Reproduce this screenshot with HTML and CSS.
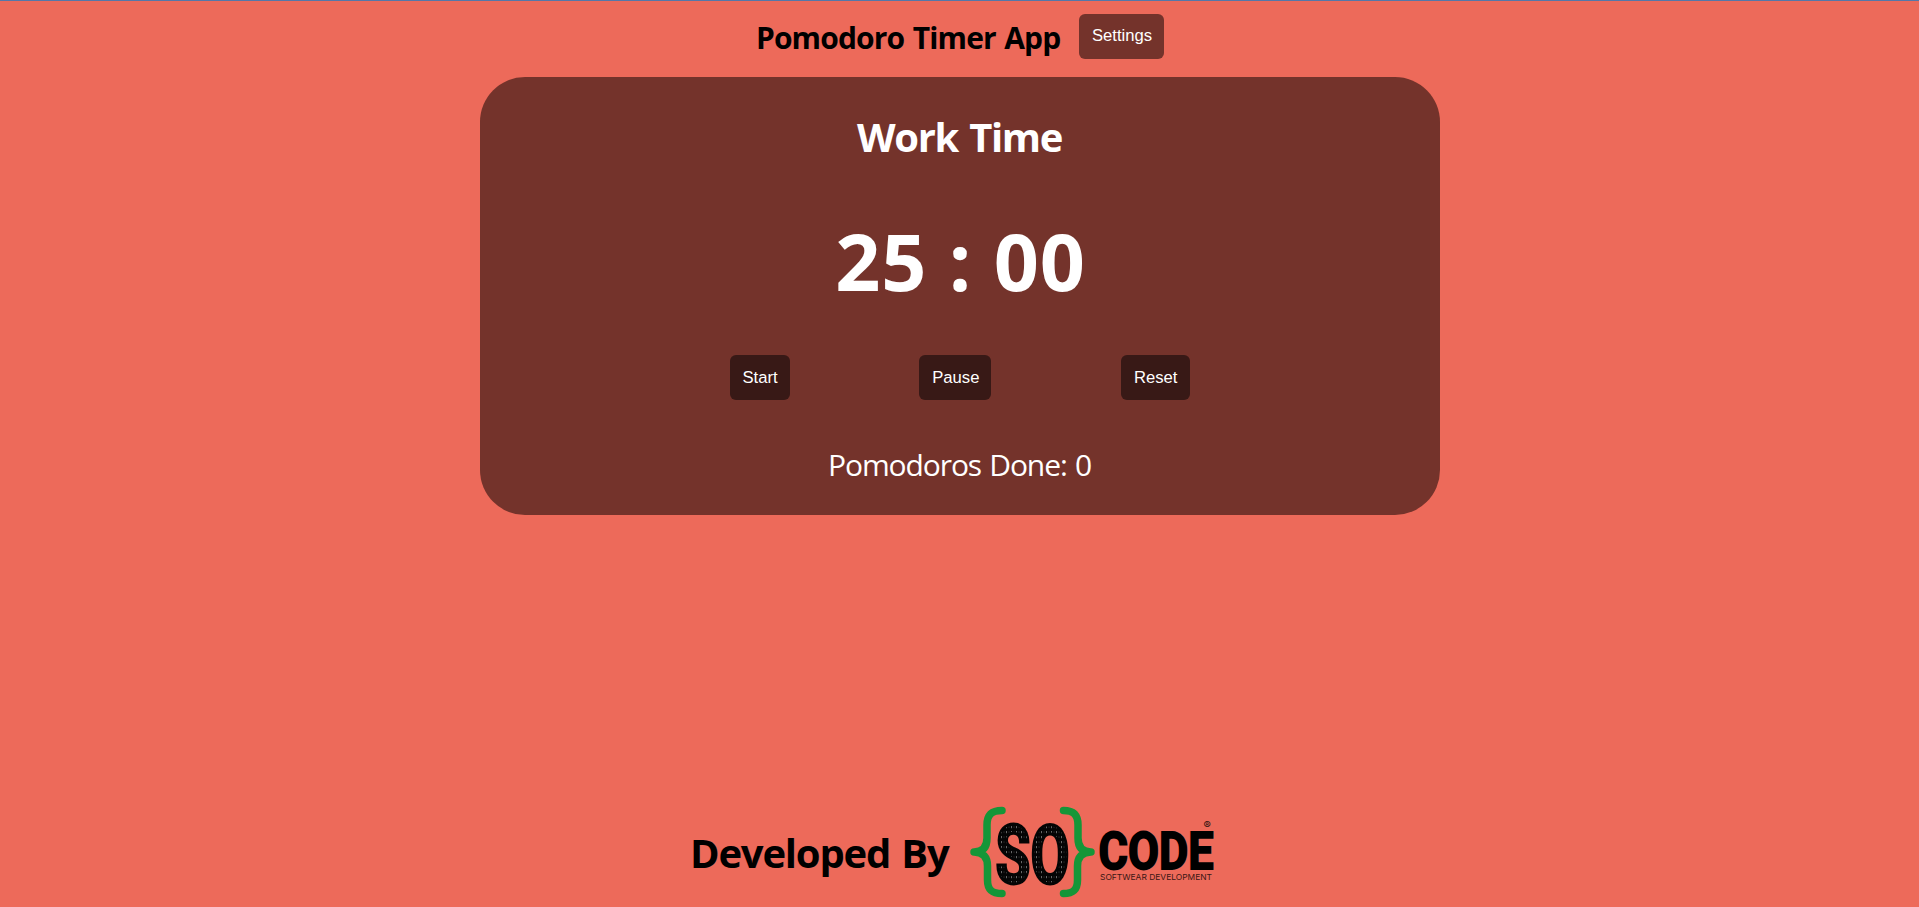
FILE: index.html
```html
<!DOCTYPE html>
<html lang="en">
<head>
<meta charset="utf-8">
<title>Pomodoro Timer App</title>
<link rel="stylesheet" href="styles.css">
</head>
<body>
<header class="header">
  <h1 class="title">Pomodoro Timer App</h1>
  <button class="btn btn-settings">Settings</button>
</header>
<main class="card">
  <h2 class="mode">Work Time</h2>
  <div class="time">25 : 00</div>
  <div class="controls">
    <button class="btn">Start</button>
    <button class="btn">Pause</button>
    <button class="btn">Reset</button>
  </div>
  <p class="done">Pomodoros Done: 0</p>
</main>
<footer class="footer">
  <h2 class="credit">Developed By</h2>
  <svg class="logo" width="246" height="96" viewBox="969 804 246 96">
    <defs>
      <pattern id="bits" width="5" height="5" patternUnits="userSpaceOnUse">
        <rect width="5" height="5" fill="#050505"/>
        <rect x="1" y="1" width="1" height="2.2" fill="#666"/>
        <rect x="3.5" y="1.5" width="1" height="1.2" fill="#333"/>
      </pattern>
    </defs>
    <g fill="none" stroke="#159638" stroke-width="7.5" stroke-linecap="round" stroke-linejoin="round">
      <path d="M1002 810.500C992 810.500 987 814 987 825V838C987 847 983 852 974 852C983 852 987.500 857 987.500 866V880C987.500 890 992 893.500 1002 893.500"/>
      <path d="M1063.500 810.500C1073 810.500 1078 814 1078 825V838C1078 847 1082 852 1091 852C1082 852 1077.500 857 1077.500 866V880C1077.500 890 1073 893.500 1063.500 893.500"/>
    </g>
    <text class="logo-so" x="995.500" y="883" textLength="74" lengthAdjust="spacingAndGlyphs" fill="url(#bits)">SO</text>
    <text class="logo-code" x="1098.500" y="868.500" textLength="115" lengthAdjust="spacingAndGlyphs">CODE</text>
    <text class="logo-sub" x="1100" y="880" textLength="112" lengthAdjust="spacingAndGlyphs">SOFTWEAR DEVELOPMENT</text>
    <text class="logo-reg" x="1203.500" y="829">®</text>
  </svg>
</footer>
</body>
</html>
```
FILE: styles.css
```css
* { box-sizing: border-box; }
body {
  margin: 0;
  height: 907px;
  display: flex;
  flex-direction: column;
  align-items: center;
  overflow: hidden;
  background: #ed6a5a;
  border-top: 1px solid #5577a8;
  font-family: "Segoe UI", "Open Sans", "Noto Sans", sans-serif;
  color: #000;
}
h1, h2, p { margin: 0; font-weight: 700; white-space: nowrap; }
.header {
  height: 76px;
  padding-top: 13px;
  padding-left: 1px;
  display: flex;
  align-items: flex-start;
  gap: 19px;
}
.title { font-size: 30px; line-height: 48px; width: 304px; letter-spacing: -0.85px; word-spacing: 1.5px; }
.btn {
  height: 45px;
  padding: 0 12px 0 13px;
  border: 0;
  border-radius: 6px;
  background: #381916;
  color: #fff;
  font: 16.67px/45px "Liberation Sans", Arial, sans-serif;
}
.btn-settings { background: #74332b; line-height: 43px; padding-bottom: 2px; }
.card {
  width: 960px;
  height: 438px;
  border-radius: 45px;
  background: #74332b;
  color: #fff;
  display: flex;
  flex-direction: column;
  align-items: center;
}
.mode { margin-top: 30px; font-size: 40px; line-height: 60px; letter-spacing: -1.4px; word-spacing: 2.5px; }
.time { margin-top: 38px; font-size: 79px; font-weight: 700; line-height: 112px; white-space: nowrap; letter-spacing: 0.9px; padding-left: 2px; }
.controls {
  margin-top: 38px;
  width: 460px;
  display: flex;
  justify-content: space-between;
}
.done { margin-top: 44px; font-size: 30px; font-weight: 400; line-height: 42px; letter-spacing: -1.1px; word-spacing: 1.5px; }
.footer {
  margin-top: auto;
  height: 103px;
  display: flex;
  align-items: flex-start;
  gap: 21px;
  margin-left: -14px;
}
.credit { font-size: 40px; line-height: 60px; padding-top: 19px; width: 258px; letter-spacing: -1.2px; word-spacing: 2px; }
.logo { display: block; overflow: visible; }
.logo-so { font: 700 82px Roboto, sans-serif; stroke: #050505; stroke-width: 3px; }
.logo-code { font: 700 51px Roboto, sans-serif; fill: #000; stroke: #000; stroke-width: 1.8px; }
.logo-sub { font: 400 8px Inter, sans-serif; fill: #3b1714; }
.logo-reg { font: 400 11px Inter, sans-serif; fill: #2a100d; }
```
